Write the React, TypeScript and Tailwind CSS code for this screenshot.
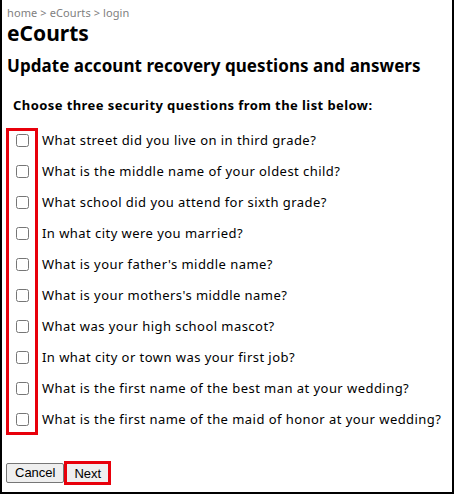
const questions = [
  'What street did you live on in third grade?',
  'What is the middle name of your oldest child?',
  'What school did you attend for sixth grade?',
  'In what city were you married?',
  "What is your father's middle name?",
  "What is your mothers's middle name?",
  'What was your high school mascot?',
  'In what city or town was your first job?',
  'What is the first name of the best man at your wedding?',
  'What is the first name of the maid of honor at your wedding?',
];

export default function App() {
  return (
    <div
      className="relative w-[454px] h-[494px] border-x-2 border-b-2 border-black bg-white text-black"
      style={{ fontFamily: '"Noto Sans", sans-serif' }}
    >
      <div className="px-[5px]">
        {/* breadcrumb */}
        <div className="pt-[6px] text-[11px] leading-[14px] text-[#808080] tracking-[0.1px]">home &gt; eCourts &gt; login</div>
        <h1 className="text-[21px] leading-[26px] font-bold">eCourts</h1>
        <h2 className="mt-[8px] text-[17px] leading-[24px] font-bold tracking-[0.05px]">Update account recovery questions and answers</h2>
        <p className="mt-[18px] pl-[6px] text-[13px] leading-[18px] font-bold tracking-[0.42px]">
          Choose three security questions from the list below:
        </p>
      </div>

      {/* questions */}
      <div className="mt-[11px] flex flex-col">
        {questions.map((q) => (
          <label key={q} className="flex items-center h-[31px] pl-[14px] text-[13px] tracking-[0.45px]">
            <input type="checkbox" className="m-0 w-[13px] h-[13px] mr-[13px]" />
            <span>{q}</span>
          </label>
        ))}
      </div>

      {/* highlight around checkboxes */}
      <div className="absolute left-[4px] top-[128px] w-[32px] h-[307px] border-[3px] border-[#e8000b] pointer-events-none" />

      <div className="mt-[26px] pl-[4px] flex items-center" style={{ fontFamily: '"Liberation Sans", Arial, sans-serif' }}>
        <button className="h-[20px] px-[8px] mb-[1px] text-[13px] leading-none bg-[#efefef] border border-[#767676] rounded-[2px]">
          Cancel
        </button>
        <button className="h-[24px] px-[7px] text-[13px] leading-none bg-[#efefef] border-[3px] border-[#e8000b]">
          Next
        </button>
      </div>
    </div>
  );
}
